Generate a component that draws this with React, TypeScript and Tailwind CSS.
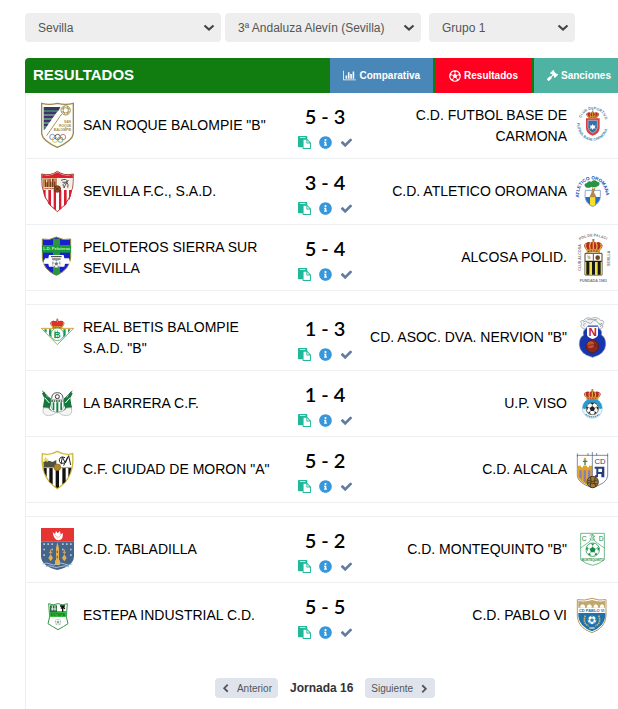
import type { ReactNode } from "react";
import { FaGavel, FaInfoCircle, FaRegFutbol } from "react-icons/fa";

function Crest({ label, children }: { label: string; children: ReactNode }) {
  return (
    <svg role="img" aria-label={label} viewBox="0 0 102 159" className="h-[53px] w-[34px] overflow-visible font-['Liberation_Sans',sans-serif]">
      {children}
    </svg>
  );
}

function Crown({ x, y, w, h }: { x: number; y: number; w: number; h: number }) {
  return (
    <svg x={x} y={y} width={w} height={h} viewBox="0 0 60 44" preserveAspectRatio="none">
      <path d="M12 36 Q-4 22 6 14 Q14 6 22 12 Q30 4 38 12 Q46 6 54 14 Q64 22 48 36Z" fill="#b32b20" />
      <path d="M12 34 Q2 20 9 15 M22 34 Q16 20 22 12 M30 34 V8 M38 34 Q44 20 38 12 M48 34 Q58 20 51 15" fill="none" stroke="#e0b040" strokeWidth="4" />
      <path d="M30 0 V10 M26 4 H34" stroke="#9a6a20" strokeWidth="3" />
      <path d="M10 33 Q30 28 50 33 V42 Q30 37 10 42Z" fill="#d09a30" />
      <path d="M14 38 Q30 34 46 38" fill="none" stroke="#a02020" strokeWidth="3" strokeDasharray="4 4" />
    </svg>
  );
}

function Ball({ x, y, r, color = "#222" }: { x: number; y: number; r: number; color?: string }) {
  return (
    <svg x={x - r} y={y - r} width={r * 2} height={r * 2} viewBox="0 0 40 40">
      <circle cx="20" cy="20" r="18.5" fill="#fff" stroke={color} strokeWidth="2" />
      <path d="M20 12 L28 18 L25 27 H15 L12 18Z M14 3 L26 3 L20 8Z M1 17 L7 13 L6 24Z M39 17 L33 13 L34 24Z M8 34 L10 28 L16 36Z M32 34 L30 28 L24 36Z" fill={color} />
      <path d="M20 12 V7 M28 18 L34 15 M25 27 L29 32 M15 27 L11 32 M12 18 L6 15" stroke={color} strokeWidth="1.5" />
    </svg>
  );
}

const crests: Record<string, ReactNode> = {
  sanRoque: (
    <>
      <path d="M2 13 Q25 19 49 13 Q74 19 97 13 V104 Q94 126 49 145 Q5 126 2 104Z" fill="#fff" stroke="#9c8a4a" strokeWidth="4" />
      <path d="M8 24 H58 L54 33 H8Z M8 37 H50 L43 46 H8Z M8 50 H40 L34 58 H8Z M8 62 H32 L26 70 H8Z M8 74 H23 L18 82 H8Z" fill="#43316b" />
      <path d="M8 33 H54 L51 37 H8Z M8 46 H43 L40 50 H8Z M8 58 H34 L31 62 H8Z M8 70 H26 L22 74 H8Z M8 82 H18 L11 92 H8Z" fill="#3b7a63" />
      <circle cx="74" cy="34" r="14" fill="#fff" stroke="#a8965a" strokeWidth="3" />
      <path d="M62 30 Q74 22 86 30 M62 38 Q74 46 86 38 M70 21 Q62 34 72 47 M79 21 Q86 34 78 47 M62 45 L17 110" fill="none" stroke="#a8965a" strokeWidth="3" />
      <g fill="#a08c4c" fontSize="10" fontWeight="bold" textAnchor="end">
        <text x="90" y="72">SAN</text>
        <text x="91" y="83">ROQUE</text>
        <text x="91" y="95">BALOMPIE</text>
      </g>
      <g fill="none" strokeWidth="2.5">
        <circle cx="34" cy="114" r="8" stroke="#5a86c0" />
        <circle cx="50" cy="114" r="8" stroke="#444" />
        <circle cx="66" cy="114" r="8" stroke="#d06060" />
        <circle cx="42" cy="122" r="8" stroke="#d9b94a" />
        <circle cx="58" cy="122" r="8" stroke="#58a070" />
      </g>
    </>
  ),
  sevilla: (
    <>
      <path d="M2 27 Q28 34 49 19 Q70 34 97 27 Q101 105 49 140 Q-2 105 2 27Z" fill="#fff" stroke="#a33a2c" strokeWidth="3" />
      <path d="M4 29 Q28 36 49 22 Q70 36 95 29 L96 39 H3Z" fill="#df1f2d" />
      <path d="M5 40 H48 V73 H7Z" fill="#c88a55" />
      <path d="M14 71 V48 H20 V71 M28 71 V44 H35 V71 M41 71 V50" fill="none" stroke="#7a3d22" strokeWidth="4" />
      <path d="M17 44 V52 M31 40 V50 M8 68 H46" stroke="#f2d9a8" strokeWidth="4" />
      <path d="M50 40 H95 L93 73 H50Z" fill="#f4efe6" />
      <path d="M60 46 Q80 38 77 52 Q58 58 72 68 M82 45 L68 69 M64 52 Q86 48 80 68" fill="none" stroke="#555" strokeWidth="3" />
      <path d="M7 75 H14 V103 L9 90Z M22 75 H30 V124 L22 116Z M38 75 H45 V136 L38 131Z M54 75 H61 V131 L54 136Z M69 75 H77 V117 L69 124Z M84 75 H92 Q89 98 84 106Z" fill="#d91e31" />
      <circle cx="49" cy="72" r="10" fill="#9a4a28" stroke="#542514" strokeWidth="2" />
      <path d="M42 67 L56 77 M56 67 L42 77" stroke="#542514" strokeWidth="2" />
    </>
  ),
  peloteros: (
    <>
      <path d="M4 24 Q24 30 46 18 Q68 30 89 24 V80 Q86 116 46 133 Q6 116 4 80Z" fill="#1721c9" stroke="#9a8c3a" strokeWidth="3" />
      <path d="M36 23 H57 V129 L46 133 L36 129Z M5 86 H88 Q86 93 84 99 H8Z" fill="#2d9440" />
      <path d="M3 42 H90 V65 H3Z" fill="#169a3c" />
      <text x="47" y="58" textAnchor="middle" fontSize="12" fontWeight="bold" fill="#d7ef9c">L.D. Peloteros</text>
      <path d="M24 72 H68 L70 82 H84 L88 98 H72 L70 107 H24 L22 98 H6 L12 82 H22Z" fill="#fff" />
      <path d="M30 77 H62 M33 84 H59" stroke="#333" strokeWidth="3" />
      <Ball x={46} y={98} r={13} color="#6f7480" />
    </>
  ),
  betis: (
    <>
      <path d="M1 52 H98 L49 101Z" fill="#fff" stroke="#c9a63f" strokeWidth="3" />
      <path d="M10 55 H17 V65 L10 59Z M24 55 H31 V79 L24 73Z M67 55 H74 V73 L67 80Z M81 55 H89 L81 66Z" fill="#159a5b" />
      <circle cx="49" cy="70" r="19" fill="#fff" stroke="#159a5b" strokeWidth="2" />
      <text x="49" y="81" textAnchor="middle" fontSize="29" fontWeight="bold" fill="#159a5b">B</text>
      <path d="M42 58 V82 M49 58 V82" stroke="#159a5b" strokeWidth="2" />
      <Crown x={26} y={22} w={46} h={33} />
      <path d="M31 33 Q40 25 48 35 Q58 25 66 33 L60 45 H37Z" fill="#df3030" />
    </>
  ),
  barrera: (
    <>
      <path d="M4 42 L30 68 M94 42 L68 68" stroke="#274d35" strokeWidth="3" />
      <path d="M3 49 L10 44 L18 60 L27 62 L34 73 L24 97 L6 89 L10 64Z M95 49 L88 44 L80 60 L71 62 L64 73 L74 97 L92 89 L88 64Z" fill="#14773b" />
      <path d="M11 62 L25 78 M87 62 L73 78" stroke="#fff" strokeWidth="3" />
      <path d="M32 65 Q32 47 49 47 Q66 47 66 65" fill="#fff" stroke="#555" strokeWidth="3" />
      <circle cx="49" cy="59" r="6" fill="none" stroke="#333" strokeWidth="3" />
      <path d="M30 67 H68 V86 Q66 101 49 108 Q32 101 30 86Z" fill="#fff" stroke="#8a938d" strokeWidth="2" />
      <path d="M35 76 H40 V99 H35Z M46 76 H52 V106 H46Z M58 76 H63 V99 H58Z" fill="#158344" />
      <path d="M31 72 H67" stroke="#274d35" strokeWidth="4" strokeDasharray="5 2" />
      <path d="M5 88 L22 78 L26 94 Q30 103 42 106 L34 112 L10 108Z M93 88 L76 78 L72 94 Q68 103 56 106 L64 112 L88 108Z" fill="#14773b" />
      <path d="M7 92 Q1 114 22 116 Q39 116 45 106 Q26 102 22 93Z M91 92 Q97 114 76 116 Q59 116 53 106 Q72 102 76 93Z" fill="#f4f4f4" stroke="#a9b0ac" strokeWidth="2" />
    </>
  ),
  moron: (
    <>
      <path d="M4 32 Q28 38 49 25 Q70 38 95 32 Q102 104 49 137 Q-3 104 4 32Z" fill="#fff" stroke="#d2ba38" strokeWidth="4" />
      <path d="M7 56 Q22 50 34 57 L46 51 V73 H8Z" fill="#4e5040" />
      <path d="M14 40 L17 47 L24 47 L19 51 L21 58 L14 54 L8 58 L10 51 L6 47 H12Z" fill="#ecd54b" />
      <path d="M60 64 L64 42 L73 60 L83 38 L89 66 M72 44 Q58 38 55 50 Q54 64 70 60 M80 42 L68 68" fill="none" stroke="#222" strokeWidth="3" />
      <path d="M8 75 H17 V101 L11 90Z M25 75 H35 V124 L25 116Z M44 75 H54 V132 L49 135 L44 132Z M64 75 H74 V116 L64 124Z M82 75 H91 Q88 91 82 102Z" fill="#111" />
      <path d="M6 74 H92" stroke="#a69b55" strokeWidth="3" />
      <circle cx="49" cy="73" r="10" fill="#b9852a" stroke="#806018" strokeWidth="2" />
    </>
  ),
  tabladilla: (
    <>
      <path d="M0 15 H99 V56 H0Z" fill="#e43532" />
      <path d="M0 56 H99 V100 Q98 130 49 141 Q1 130 0 100Z" fill="#46658b" />
      <path d="M35 27 L42 34 L45 24 L50 31 L57 24 L59 35 L65 29 Q68 47 56 51 Q39 55 35 27Z" fill="#fff" />
      <path d="M42 36 Q51 50 60 36" fill="none" stroke="#e99" strokeWidth="2" />
      <g fill="#b7c5d2">
        <path d="M7 61 H12 V66 H7Z M19 61 H24 V66 H19Z M31 61 H36 V66 H31Z M63 61 H68 V66 H63Z M75 61 H80 V66 H75Z M87 61 H92 V66 H87Z M7 77 H12 V82 H7Z M31 77 H36 V82 H31Z M63 77 H68 V82 H63Z M87 77 H92 V82 H87Z M7 94 H12 V99 H7Z M87 94 H92 V99 H87Z" />
      </g>
      <path d="M49 57 L54 76 V122 H45 V76Z M29 94 L36 105 L29 115 L22 105Z M70 94 L77 105 L70 115 L63 105Z M42 112 H57 V126 H42Z" fill="#e4b052" />
      <path d="M29 80 V94 M70 80 V94 M24 88 H34 M65 88 H75" stroke="#d8a55a" strokeWidth="3" />
      <path d="M49 83 V90 M49 98 V106" stroke="#6c704c" strokeWidth="4" />
      <path d="M5 123 Q16 117 27 123 T49 123 T71 123 T94 123 M14 131 Q25 126 35 131 T58 131 T84 131" fill="none" stroke="#a9c1d3" strokeWidth="3" />
    </>
  ),
  estepa: (
    <>
      <path d="M23 44 Q36 51 51 44 Q66 51 79 44 L76 83 L81 104 Q69 112 51 122 Q33 112 21 104 L26 83Z" fill="#fff" stroke="#359849" strokeWidth="3" />
      <path d="M26 66 H76 V84 H26Z" fill="#34bd3b" />
      <path d="M27 49 H48 V70 H27Z" fill="#2e6940" />
      <path d="M34 50 V65 M42 50 V65 M30 60 H46" stroke="#e6eee6" strokeWidth="3" />
      <path d="M57 51 H72 M60 59 Q66 48 71 60 M65 51 V68" fill="none" stroke="#111" strokeWidth="4" />
      <text x="51" y="80" textAnchor="middle" fontSize="11" fontWeight="bold" fill="#15692b">ESTEPA</text>
      <Ball x={51} y={99} r={10} color="#8aa090" />
    </>
  ),
  carmona: (
    <>
      <path id="carmonaRing" d="M18 57 A38 40 0 0 1 90 60" fill="none" />
      <path id="carmonaBase" d="M6 72 A46 52 0 0 0 100 72" fill="none" />
      <text fontSize="11" fontWeight="bold" fill="#427f9f">
        <textPath href="#carmonaRing">CLUB DEPORTIVO</textPath>
        <textPath href="#carmonaBase">FUTBOL BASE CARMONA</textPath>
      </text>
      <Crown x={32} y={34} w={42} h={26} />
      <path d="M33 58 H74 V87 Q73 104 53 110 Q34 104 33 87Z" fill="#d34343" />
      <path d="M39 64 H67 V86 Q65 97 53 102 Q41 97 39 86Z" fill="#2d73b4" stroke="#e9c6a8" strokeWidth="2" />
      <path d="M53 75 L56 80 L62 79 L59 84 L62 89 L56 88 L53 93 L50 88 L44 89 L47 84 L44 79 L50 80Z" fill="#fff" />
    </>
  ),
  oromana: (
    <>
      <path id="oromanaArc" d="M12 98 C7 25 96 25 93 99" fill="none" />
      <text fontSize="14" fontWeight="bold" fill="#244caf"><textPath href="#oromanaArc">ATLETICO OROMANA</textPath></text>
      <path d="M31 76 H76 V94 Q75 115 53 125 Q31 115 30 94Z" fill="#fff" stroke="#527dba" strokeWidth="2" />
      <path d="M31 96 H76 Q73 115 53 124 Q33 115 31 96Z" fill="#296cc1" />
      <path d="M45 96 H61 V119 L53 124 L45 119Z" fill="#f6e12a" />
      <path d="M53 65 L49 83 L43 97 H65 L57 82 L62 66 L55 72Z" fill="#b18a50" />
      <path d="M31 65 Q24 57 36 54 Q39 46 49 50 Q58 42 67 50 Q79 52 70 63 Q57 70 50 65 Q38 72 31 65Z" fill="#299345" />
    </>
  ),
  alcosa: (
    <>
      <path id="alcosaArc" d="M14 28 Q54 4 96 28" fill="none" />
      <g fontSize="11" fontWeight="bold" fill="#777">
        <text><textPath href="#alcosaArc">POL.DE PALACIO</textPath></text>
        <text transform="rotate(-90 17 119)" x="17" y="119">CLUB ALCOSA</text>
        <text transform="rotate(-90 104 105)" x="104" y="105">SEVILLA</text>
        <text x="55" y="152" textAnchor="middle" fontSize="11">FUNDADA 1983</text>
      </g>
      <Crown x={25} y={23} w={60} h={45} />
      <path d="M30 67 H81 V132 H30Z" fill="#fff" stroke="#4f4931" strokeWidth="3" />
      <path d="M31 92 H80 V131 H31Z" fill="#f1dd45" />
      <path d="M34 92 H43 V131 H34Z M51 92 H60 V131 H51Z M68 92 H77 V131 H68Z M31 89 H80 V93 H31Z" fill="#171717" />
      <path d="M55 69 V89 M38 75 L45 82" stroke="#555" strokeWidth="3" />
      <circle cx="68" cy="80" r="7" fill="#6d4823" />
      <path d="M36 78 L43 73 L48 80 L42 86Z" fill="#c9bb93" />
    </>
  ),
  nervion: (
    <>
      <path d="M27 54 Q13 47 20 38 Q12 29 26 28 Q34 17 49 22 Q66 15 77 28 Q92 28 83 40 Q88 49 75 55Z" fill="#f5f6f6" stroke="#87929b" strokeWidth="2" />
      <path d="M24 34 Q30 26 38 34 T53 32 T68 34 T81 36 M28 47 Q22 38 32 38 M75 48 Q85 39 72 39 M37 26 H66" fill="none" stroke="#9aabb7" strokeWidth="3" />
      <path d="M33 53 L39 44 H68 L72 53 Q82 57 79 72 Q92 79 92 101 Q90 129 53 139 Q14 129 13 101 Q13 79 26 73 Q22 59 33 53Z" fill="#1536ae" stroke="#79829a" strokeWidth="2" />
      <path d="M36 47 H69 V72 Q67 80 53 84 Q38 80 36 72Z" fill="#fff" />
      <text x="53" y="75" textAnchor="middle" fontSize="35" fontWeight="bold" fill="#c51838">N</text>
      <circle cx="52" cy="106" r="19" fill="#8b281c" stroke="#4c1726" strokeWidth="2" />
      <circle cx="47" cy="101" r="10" fill="#c4522e" />
      <path d="M34 107 Q53 95 70 107" fill="none" stroke="#641e18" strokeWidth="2" />
    </>
  ),
  viso: (
    <>
      <circle cx="52" cy="94" r="30" fill="#eaf6fa" stroke="#9bc6d8" strokeWidth="2" />
      <path d="M22 94 A30 30 0 0 1 82 94 L74 97 A22 22 0 0 0 31 97Z" fill="#269cd4" />
      <path d="M32 112 Q52 127 73 112" fill="none" stroke="#4e8eab" strokeWidth="4" strokeDasharray="4 2" />
      <Ball x={52} y={95} r={20} />
      <Crown x={25} y={36} w={54} h={34} />
    </>
  ),
  alcala: (
    <>
      <path d="M7 37 H98 V99 Q96 121 52 134 Q9 121 7 99Z" fill="#fff" stroke="#41547e" strokeWidth="2" />
      <path d="M8 75 H52 V132 Q11 119 8 99Z" fill="#dda52e" />
      <path d="M13 82 H20 V109 L13 103Z M26 82 H33 V119 L26 115Z M39 82 H46 V126 L39 122Z" fill="#877eb9" />
      <path d="M8 68 H18 V73 H24 V68 H36 V73 H42 V68 H52 V77 H8Z" fill="#dda52e" />
      <path d="M30 67 V48 M24 55 H37" stroke="#398246" strokeWidth="4" />
      <circle cx="30" cy="48" r="4" fill="#dda52e" />
      <path d="M52 27 V132 M39 30 V38 M65 30 V38 M7 31 V40 M98 31 V40" stroke="#41547e" strokeWidth="2" />
      <text x="75" y="62" textAnchor="middle" fontSize="23" fill="#30446e">CD</text>
      <path d="M59 71 H88 V103 H79 V93 H69 V103 H60 V97 H64 V77 H59Z M70 77 V87 H81 V77Z" fill="#263f7c" fillRule="evenodd" />
      <circle cx="53" cy="117" r="17" fill="#a47b31" stroke="#493c26" strokeWidth="3" />
      <path d="M38 111 Q53 120 68 110 M47 101 Q50 117 45 132 M61 102 Q53 119 63 131 M36 119 L68 123" fill="none" stroke="#493c26" strokeWidth="3" />
    </>
  ),
  montequinto: (
    <>
      <path d="M17 31 H88 V110 Q72 124 53 127 Q34 124 17 110Z" fill="#fff" stroke="#229954" strokeWidth="2" />
      <path d="M17 75 L45 55 L52 34 L60 55 L88 75 M43 39 Q51 30 60 40 Q46 44 58 51 Q47 54 44 46" fill="none" stroke="#3ca366" strokeWidth="2" />
      <Ball x={53} y={80} r={22} color="#168b48" />
      <path id="quintoArc" d="M20 101 Q53 127 87 101" fill="none" />
      <text fill="#168b48" fontSize="20">
        <tspan x="20" y="54">C</tspan>
        <tspan x="71" y="54">D</tspan>
      </text>
      <text x="53" y="114" textAnchor="middle" fontSize="9" fontWeight="bold" fill="#168b48">MONTEQUINTO</text>
    </>
  ),
  pabloVi: (
    <>
      <path d="M7 32 Q30 36 51 28 Q72 36 93 32 V82 Q91 117 51 131 Q9 117 7 82Z" fill="#fff" stroke="#b49a5e" strokeWidth="3" />
      <path d="M10 36 Q31 40 51 33 Q71 40 90 36 V56 H10Z" fill="#c2a66b" />
      <path d="M16 56 V50 Q23 41 30 50 V56Z M36 56 V50 Q43 41 50 50 V56Z M56 56 V50 Q62 41 69 50 V56Z M75 56 V50 Q81 41 87 50 V56Z" fill="#fff" />
      <path d="M10 72 H91 V82 Q88 113 51 127 Q13 113 10 82Z" fill="#2072a8" />
      <text x="50" y="69" textAnchor="middle" fontSize="12" fontWeight="bold" fill="#246fa2">CD PABLO VI</text>
      <Ball x={51} y={93} r={14} color="#3282b2" />
      <path d="M31 80 Q22 103 41 111 M71 80 Q80 103 61 111" fill="none" stroke="#c7b679" strokeWidth="5" strokeDasharray="5 2" />
      <path d="M43 117 H59" stroke="#d1e1e8" strokeWidth="4" />
    </>
  ),
};

type Match = [home: string, homeCrest: string, score: string, away: string, awayCrest: string];

const groups: Match[][] = [
  [
    ['SAN ROQUE BALOMPIE "B"', "sanRoque", "5 - 3", "C.D. FUTBOL BASE DE CARMONA", "carmona"],
    ["SEVILLA F.C., S.A.D.", "sevilla", "3 - 4", "C.D. ATLETICO OROMANA", "oromana"],
    ["PELOTEROS SIERRA SUR SEVILLA", "peloteros", "5 - 4", "ALCOSA POLID.", "alcosa"],
  ],
  [
    ['REAL BETIS BALOMPIE S.A.D. "B"', "betis", "1 - 3", 'CD. ASOC. DVA. NERVION "B"', "nervion"],
    ["LA BARRERA C.F.", "barrera", "1 - 4", "U.P. VISO", "viso"],
    ['C.F. CIUDAD DE MORON "A"', "moron", "5 - 2", "C.D. ALCALA", "alcala"],
  ],
  [
    ["C.D. TABLADILLA", "tabladilla", "5 - 2", 'C.D. MONTEQUINTO "B"', "montequinto"],
    ["ESTEPA INDUSTRIAL C.D.", "estepa", "5 - 5", "C.D. PABLO VI", "pabloVi"],
  ],
];

function PasteIcon() {
  return (
    <svg viewBox="0 0 1792 1792" className="size-[13px] fill-current" aria-hidden="true">
      <path d="M768 1664h896v-640h-416q-40 0-68-28t-28-68v-416h-384v1152zm256-1440v-64q0-13-9.500-22.500t-22.500-9.500h-704q-13 0-22.500 9.500t-9.500 22.500v64q0 13 9.500 22.500t22.500 9.500h704q13 0 22.500-9.500t9.500-22.500zm256 672h299l-299-299v299zm512 128v672q0 40-28 68t-68 28h-960q-40 0-68-28t-28-68v-160h-544q-40 0-68-28t-28-68v-1344q0-40 28-68t68-28h1088q40 0 68 28t28 68v328q21 13 36 28l408 408q28 28 48 76t20 88z" />
    </svg>
  );
}

function CheckIcon() {
  return (
    <svg viewBox="0 0 1792 1792" className="size-[13px] fill-current" aria-hidden="true">
      <path d="M1671 566q0 40-28 68l-724 724-136 136q-28 28-68 28t-68-28l-136-136-362-362q-28-28-28-68t28-68l136-136q28-28 68-28t68 28l294 295 656-657q28-28 68-28t68 28l136 136q28 28 28 68z" />
    </svg>
  );
}

function ChartIcon() {
  return (
    <svg viewBox="0 0 2048 1792" className="h-[11px] w-[13px] fill-current" aria-hidden="true">
      <path d="M640 896v512h-256v-512h256zm384-512v1024h-256v-1024h256zm1024 1152v128h-2048v-1536h128v1408h1920zm-640-896v768h-256v-768h256zm384-384v1152h-256v-1152h256z" />
    </svg>
  );
}

function Chevron({ className }: { className: string }) {
  return (
    <svg viewBox="0 0 1792 1792" className={className} aria-hidden="true">
      <path fill="currentColor" d="M1427 301l-531 531 531 531q19 19 19 45t-19 45l-166 166q-19 19-45 19t-45-19l-742-742q-19-19-19-45t19-45l742-742q19-19 45-19t45 19l166 166q19 19 19 45t-19 45z" />
    </svg>
  );
}

function Filter({ label, value, width }: { label: string; value: string; width: string }) {
  return (
    <div className={`relative ${width}`}>
      <select aria-label={label} className="h-[29px] w-full appearance-none rounded bg-[#eee] pr-6 pl-[13px] text-[12px] text-[#555]">
        <option>{value}</option>
      </select>
      <svg viewBox="0 0 12 8" className="pointer-events-none absolute top-[11px] right-[6px] h-[8px] w-[12px]" aria-hidden="true">
        <path d="M1.500 1.500 L6 5.500 L10.500 1.500" fill="none" stroke="#444" strokeWidth="2.200" />
      </svg>
    </div>
  );
}

function MatchRow({ match: [home, homeCrest, score, away, awayCrest] }: { match: Match }) {
  return (
    <li className="grid h-[66px] grid-cols-[34px_1fr_68px_1fr_34px] items-center gap-x-2 border-b border-[#edf0f3] px-[15px] group-last:last:border-transparent">
      <Crest label={home}>{crests[homeCrest]}</Crest>
      <span className="text-[14px] leading-[21px]">{home}</span>
      <div className="flex flex-col items-center pt-[3px]">
        <strong className="font-['Lato',sans-serif] text-[20px] leading-[30px] font-semibold whitespace-nowrap">{score}</strong>
        <div className="flex h-[23px] items-center gap-[8px]">
          <button aria-label="Acta del partido" className="text-[#1fb99a]"><PasteIcon /></button>
          <button aria-label="Información" className="text-[#3597dc]"><FaInfoCircle size={13} /></button>
          <button aria-label="Confirmado" className="text-[#627b9e]"><CheckIcon /></button>
        </div>
      </div>
      <span className="text-right text-[14px] leading-[21px]">{away}</span>
      <Crest label={away}>{crests[awayCrest]}</Crest>
    </li>
  );
}

export default function App() {
  return (
    <main className="min-h-screen overflow-hidden bg-white pl-[25px] font-['Liberation_Sans',Arial,sans-serif] text-black">
      <form className="flex pt-[13px]">
        <Filter label="Provincia" value="Sevilla" width="mr-1 w-[196px]" />
        <Filter label="Competición" value="3ª Andaluza Alevín (Sevilla)" width="mr-2 w-[196px]" />
        <Filter label="Grupo" value="Grupo 1" width="w-[146px]" />
      </form>

      <section className="mt-4 -mr-[6px]">
        <header className="flex h-[35px] items-stretch overflow-hidden rounded-t bg-[#117d11] text-white">
          <h1 className="flex-1 self-center pl-2 text-[15px] font-bold">RESULTADOS</h1>
          <nav className="flex gap-[3px] text-[10px] font-bold">
            <a href="#comparativa" className="flex items-center gap-[3px] bg-[#4a87b9] px-[13px]"><ChartIcon />Comparativa</a>
            <a href="#resultados" className="flex items-center gap-[3px] bg-[#ff0020] px-[13px]"><FaRegFutbol size={12} />Resultados</a>
            <a href="#sanciones" className="flex items-center gap-[3px] bg-[#4fb3a3] px-[13px]"><FaGavel size={11} />Sanciones</a>
          </nav>
        </header>

        <div className="min-h-[616px] border-l border-[#edf0f3]">
          <div>
            {groups.map((matches, i) => (
              <ul key={i} className="group border-[#edf0f3] not-first:mt-[13px] not-first:border-t">
                {matches.map((match) => <MatchRow key={match[0]} match={match} />)}
              </ul>
            ))}
          </div>
          <nav aria-label="Jornadas" className="mt-[29px] flex items-center justify-center gap-3 text-[#555]">
            <button className="flex h-5 items-center gap-[7px] rounded-sm bg-[#dfe4ec] px-[6px] text-[10px]">
              <Chevron className="size-[9px]" />Anterior
            </button>
            <span className="text-[12px] font-bold text-[#333]">Jornada 16</span>
            <button className="flex h-5 items-center gap-[7px] rounded-sm bg-[#dfe4ec] px-[6px] text-[10px]">
              Siguiente<Chevron className="size-[9px] rotate-180" />
            </button>
          </nav>
        </div>
      </section>
    </main>
  );
}
